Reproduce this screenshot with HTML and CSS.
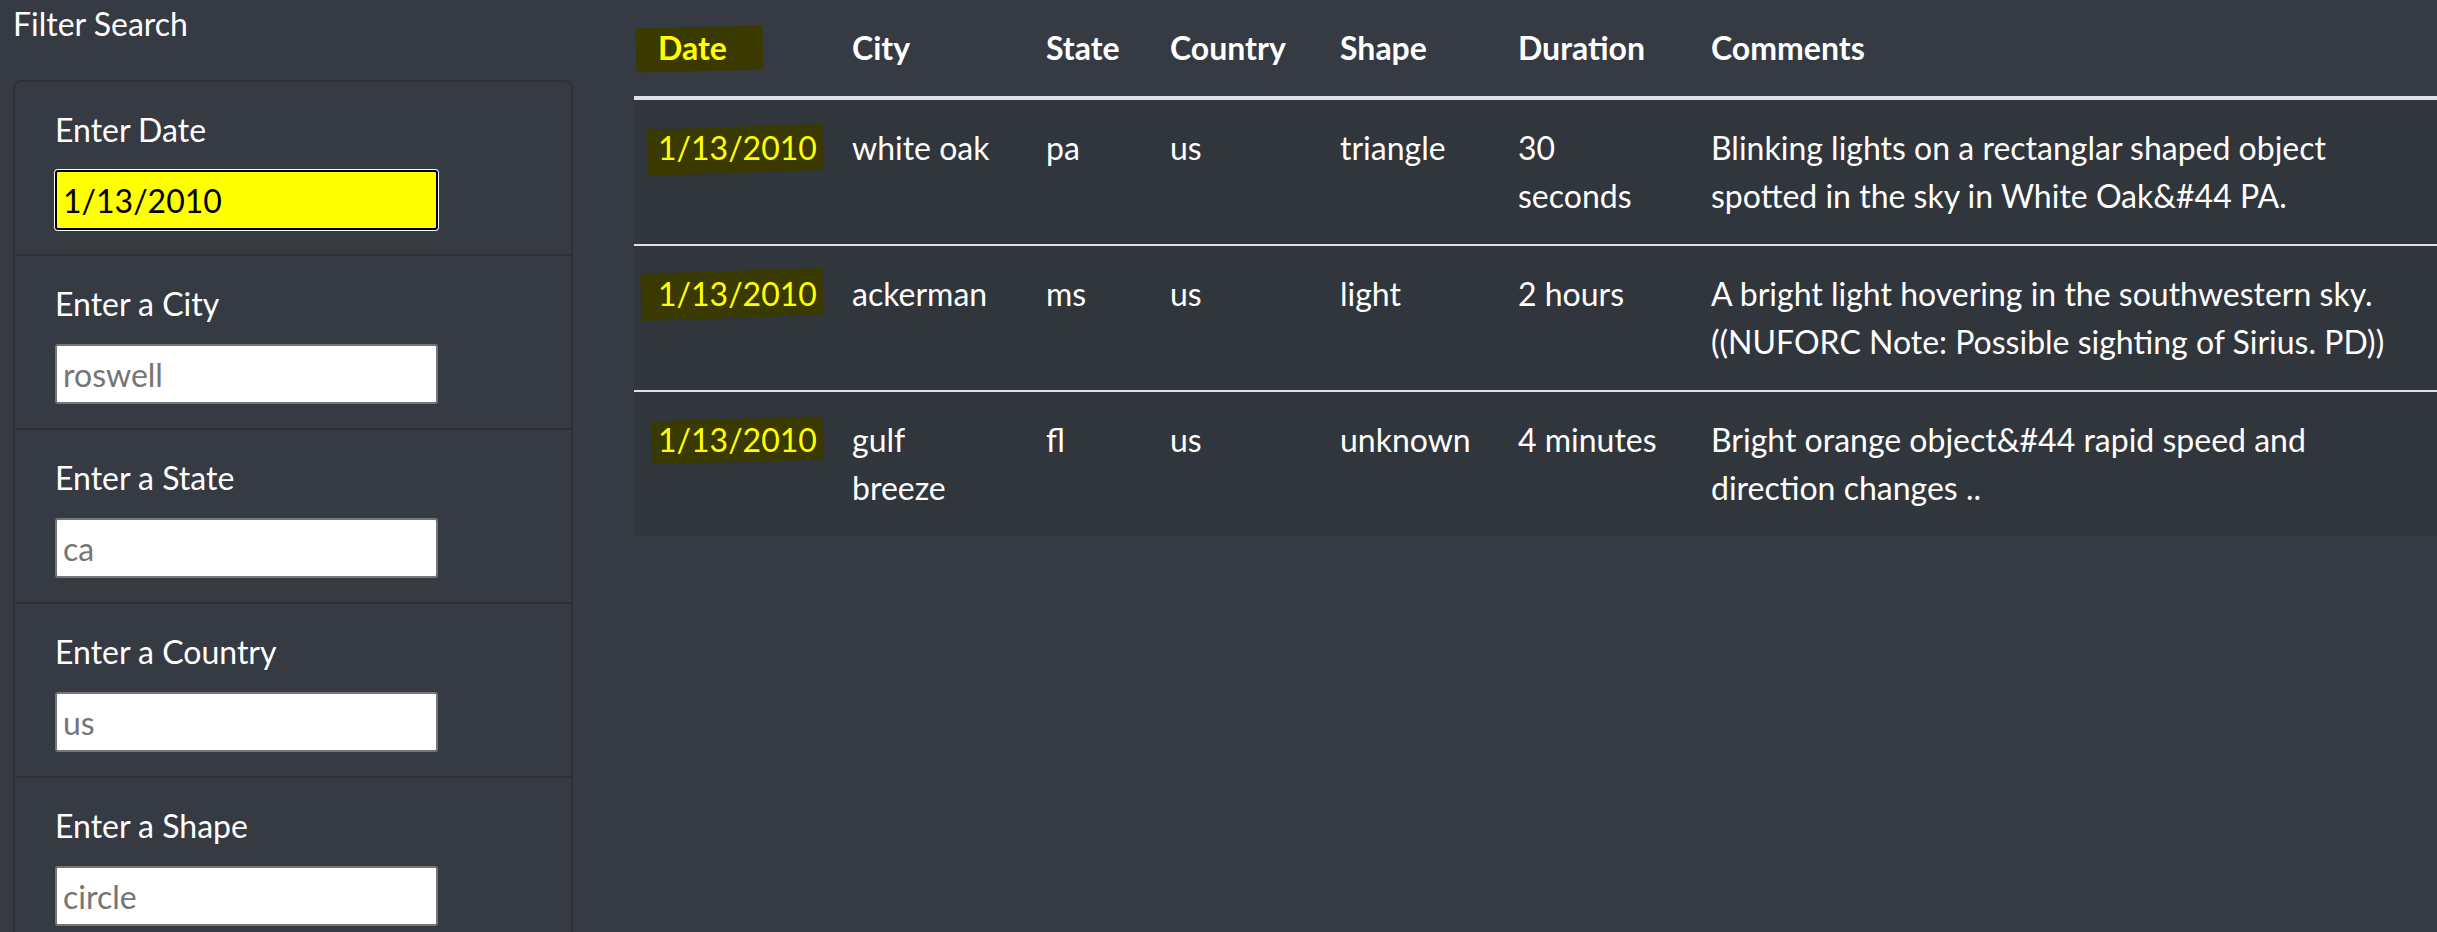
FILE: index.html
```html
<!DOCTYPE html>
<html lang="en">
<head>
<meta charset="utf-8">
<title>UFO Sightings</title>
<link rel="stylesheet" href="styles.css">
</head>
<body>
<div class="page">
  <aside class="sidebar">
    <h5 class="sidebar-title">Filter Search</h5>
    <ul class="filters">
      <li class="filter-item">
        <label class="filter-label" for="datetime">Enter Date</label>
        <input class="filter-input filter-input--active" id="datetime" type="text" value="1/13/2010">
      </li>
      <li class="filter-item">
        <label class="filter-label" for="city">Enter a City</label>
        <input class="filter-input" id="city" type="text" placeholder="roswell">
      </li>
      <li class="filter-item">
        <label class="filter-label" for="state">Enter a State</label>
        <input class="filter-input" id="state" type="text" placeholder="ca">
      </li>
      <li class="filter-item">
        <label class="filter-label" for="country">Enter a Country</label>
        <input class="filter-input" id="country" type="text" placeholder="us">
      </li>
      <li class="filter-item">
        <label class="filter-label" for="shape">Enter a Shape</label>
        <input class="filter-input" id="shape" type="text" placeholder="circle">
      </li>
    </ul>
  </aside>
  <main class="results">
    <table class="ufo-table">
      <colgroup>
        <col class="col-date">
        <col class="col-city">
        <col class="col-state">
        <col class="col-country">
        <col class="col-shape">
        <col class="col-duration">
        <col class="col-comments">
      </colgroup>
      <thead>
        <tr>
          <th><span class="hl hl--head">Date</span></th>
          <th>City</th>
          <th>State</th>
          <th>Country</th>
          <th>Shape</th>
          <th>Duration</th>
          <th>Comments</th>
        </tr>
      </thead>
      <tbody>
        <tr>
          <td><span class="hl hl--row1">1/13/2010</span></td>
          <td>white oak</td>
          <td>pa</td>
          <td>us</td>
          <td>triangle</td>
          <td>30 seconds</td>
          <td>Blinking lights on a rectanglar shaped object spotted in the sky in White Oak&amp;#44 PA.</td>
        </tr>
        <tr>
          <td><span class="hl hl--row2">1/13/2010</span></td>
          <td>ackerman</td>
          <td>ms</td>
          <td>us</td>
          <td>light</td>
          <td>2 hours</td>
          <td>A bright light hovering in the southwestern sky. ((NUFORC Note: Possible sighting of Sirius. PD))</td>
        </tr>
        <tr>
          <td><span class="hl hl--row3">1/13/2010</span></td>
          <td>gulf breeze</td>
          <td>fl</td>
          <td>us</td>
          <td>unknown</td>
          <td>4 minutes</td>
          <td>Bright orange object&amp;#44 rapid speed and direction changes ..</td>
        </tr>
      </tbody>
    </table>
  </main>
</div>
</body>
</html>
```

FILE: styles.css
```css
html, body {
  margin: 0;
  padding: 0;
}

body {
  background: #363a42;
  color: #ffffff;
  font-family: Lato, "Open Sans", "Liberation Sans", sans-serif;
  font-size: 32px;
  line-height: 48px;
  overflow: hidden;
}

.page {
  display: flex;
  align-items: flex-start;
}

.sidebar {
  flex: 0 0 auto;
  width: 560px;
  padding-left: 13px;
  padding-right: 61px;
}

.sidebar-title {
  margin: 0 0 32px 0;
  font-size: 32px;
  font-weight: 400;
  line-height: 48px;
}

.filters {
  list-style: none;
  margin: 0;
  padding: 0;
  border: 2px solid #2d3137;
  border-radius: 8px;
}

.filter-item {
  padding: 24px 40px;
  border-bottom: 2px solid #2d3137;
}

.filter-label {
  display: block;
  line-height: 48px;
  margin-bottom: 16px;
}

.filter-input {
  display: block;
  box-sizing: border-box;
  width: 383px;
  height: 60px;
  margin: 0;
  padding: 0 6px;
  border: 2px solid #767676;
  border-radius: 3px;
  background: #ffffff;
  color: #000000;
  font-family: inherit;
  font-size: 32px;
  outline: none;
}

.filter-input::placeholder {
  color: #757575;
  opacity: 1;
}

.filter-input--active {
  background: #ffff00;
  border-color: #000000;
  box-shadow: 0 0 0 1px #ffffff;
}

.results {
  flex: 1 1 auto;
  min-width: 0;
}

.ufo-table {
  width: 100%;
  border-collapse: collapse;
  table-layout: fixed;
}

.col-date { width: 194px; }
.col-city { width: 194px; }
.col-state { width: 124px; }
.col-country { width: 170px; }
.col-shape { width: 178px; }
.col-duration { width: 193px; }

.ufo-table th {
  padding: 24px;
  text-align: left;
  font-weight: 700;
  line-height: 48px;
  border-bottom: 4px solid #dee2e6;
}

.ufo-table td {
  padding: 24px;
  vertical-align: top;
  line-height: 48px;
  background: #31353c;
  border-top: 2px solid #dee2e6;
}

.ufo-table tbody tr:first-child td {
  border-top: 4px solid #dee2e6;
}

.hl {
  position: relative;
  z-index: 0;
  color: #ffff00;
}

.hl::before {
  content: "";
  position: absolute;
  z-index: -1;
  background: #393900;
  border-radius: 2px;
}

.hl--head::before {
  left: -22px;
  right: -36px;
  top: -1px;
  bottom: -4px;
  transform: rotate(-1.5deg);
}

.hl--row1::before {
  left: -11px;
  right: -6px;
  top: -1px;
  bottom: -6px;
  transform: rotate(-2deg);
}

.hl--row2::before {
  left: -17px;
  right: -6px;
  top: -3px;
  bottom: -5px;
  transform: rotate(-2deg);
}

.hl--row3::before {
  left: -6px;
  right: -6px;
  top: -1px;
  bottom: -3px;
  transform: rotate(-1.5deg);
}
```
